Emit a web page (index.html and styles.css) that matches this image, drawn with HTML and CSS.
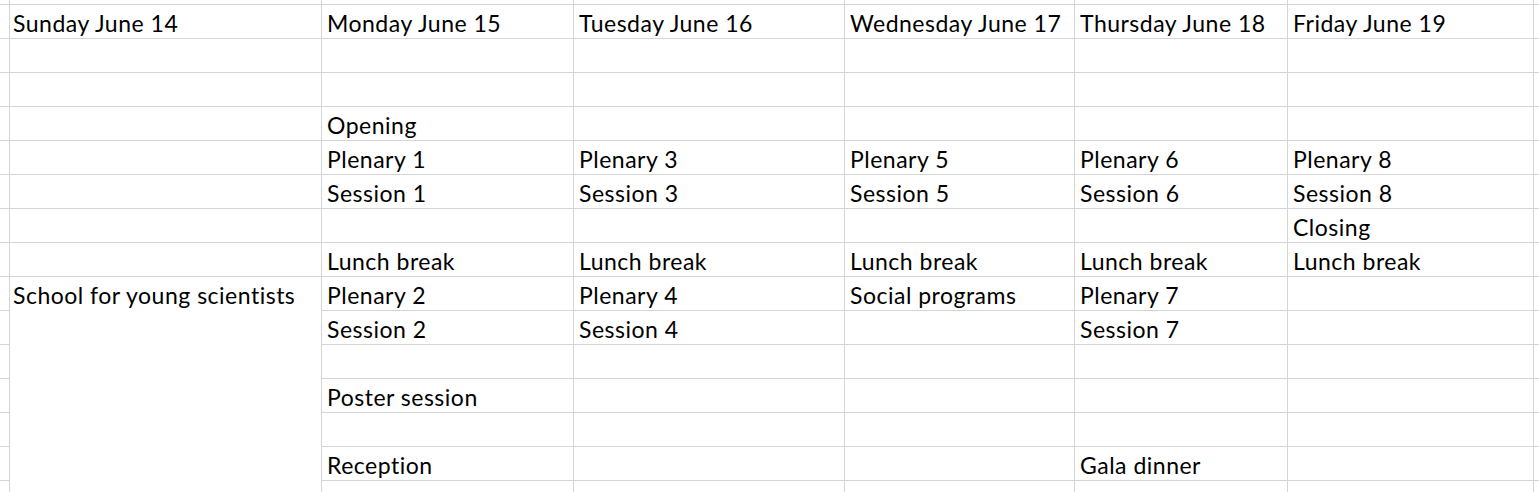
FILE: index.html
```html
<!DOCTYPE html>
<html>
<head>
<meta charset="utf-8">
<link rel="stylesheet" href="styles.css">
</head>
<body>
<div class="sheet">
  <div class="c"></div><div class="c"></div><div class="c"></div><div class="c"></div><div class="c"></div><div class="c"></div><div class="c"></div><div class="c"></div>

  <div class="c"></div><div class="c sun">Sunday June 14</div><div class="c">Monday June 15</div><div class="c">Tuesday June 16</div><div class="c">Wednesday June 17</div><div class="c">Thursday June 18</div><div class="c">Friday June 19</div><div class="c"></div>

  <div class="c"></div><div class="c"></div><div class="c"></div><div class="c"></div><div class="c"></div><div class="c"></div><div class="c"></div><div class="c"></div>

  <div class="c"></div><div class="c"></div><div class="c"></div><div class="c"></div><div class="c"></div><div class="c"></div><div class="c"></div><div class="c"></div>

  <div class="c"></div><div class="c"></div><div class="c">Opening</div><div class="c"></div><div class="c"></div><div class="c"></div><div class="c"></div><div class="c"></div>

  <div class="c"></div><div class="c"></div><div class="c">Plenary 1</div><div class="c">Plenary 3</div><div class="c">Plenary 5</div><div class="c">Plenary 6</div><div class="c">Plenary 8</div><div class="c"></div>

  <div class="c"></div><div class="c"></div><div class="c">Session 1</div><div class="c">Session 3</div><div class="c">Session 5</div><div class="c">Session 6</div><div class="c">Session 8</div><div class="c"></div>

  <div class="c"></div><div class="c"></div><div class="c"></div><div class="c"></div><div class="c"></div><div class="c"></div><div class="c">Closing</div><div class="c"></div>

  <div class="c"></div><div class="c"></div><div class="c">Lunch break</div><div class="c">Lunch break</div><div class="c">Lunch break</div><div class="c">Lunch break</div><div class="c">Lunch break</div><div class="c"></div>

  <div class="c"></div><div class="c sun merged">School for young scientists</div><div class="c">Plenary 2</div><div class="c">Plenary 4</div><div class="c">Social programs</div><div class="c">Plenary 7</div><div class="c"></div><div class="c"></div>

  <div class="c"></div><div class="c">Session 2</div><div class="c">Session 4</div><div class="c"></div><div class="c">Session 7</div><div class="c"></div><div class="c"></div>

  <div class="c"></div><div class="c"></div><div class="c"></div><div class="c"></div><div class="c"></div><div class="c"></div><div class="c"></div>

  <div class="c"></div><div class="c">Poster session</div><div class="c"></div><div class="c"></div><div class="c"></div><div class="c"></div><div class="c"></div>

  <div class="c"></div><div class="c"></div><div class="c"></div><div class="c"></div><div class="c"></div><div class="c"></div><div class="c"></div>

  <div class="c"></div><div class="c">Reception</div><div class="c"></div><div class="c"></div><div class="c">Gala dinner</div><div class="c"></div><div class="c"></div>

  <div class="c"></div><div class="c"></div><div class="c"></div><div class="c"></div><div class="c"></div><div class="c"></div><div class="c"></div>
</div>
</body>
</html>
```

FILE: styles.css
```css
html, body {
  margin: 0;
  padding: 0;
  background: #ffffff;
  overflow: hidden;
}

.sheet {
  display: grid;
  grid-template-columns: 9px 313px 252px 271px 230px 213px 246px 1fr;
  grid-template-rows: 5px repeat(15, 34px);
  font-family: "Lato", "Open Sans", sans-serif;
  font-size: 23px;
  letter-spacing: 0.5px;
  color: #000000;
}

.c {
  box-sizing: border-box;
  border-right: 1px solid #d4d4d4;
  border-bottom: 1px solid #d4d4d4;
  padding: 3px 4px 0 5px;
  line-height: 30px;
  white-space: nowrap;
  overflow: visible;
}

.sun {
  padding-left: 4px;
}

.merged {
  grid-column: 2;
  grid-row: 10 / 17;
}
```
